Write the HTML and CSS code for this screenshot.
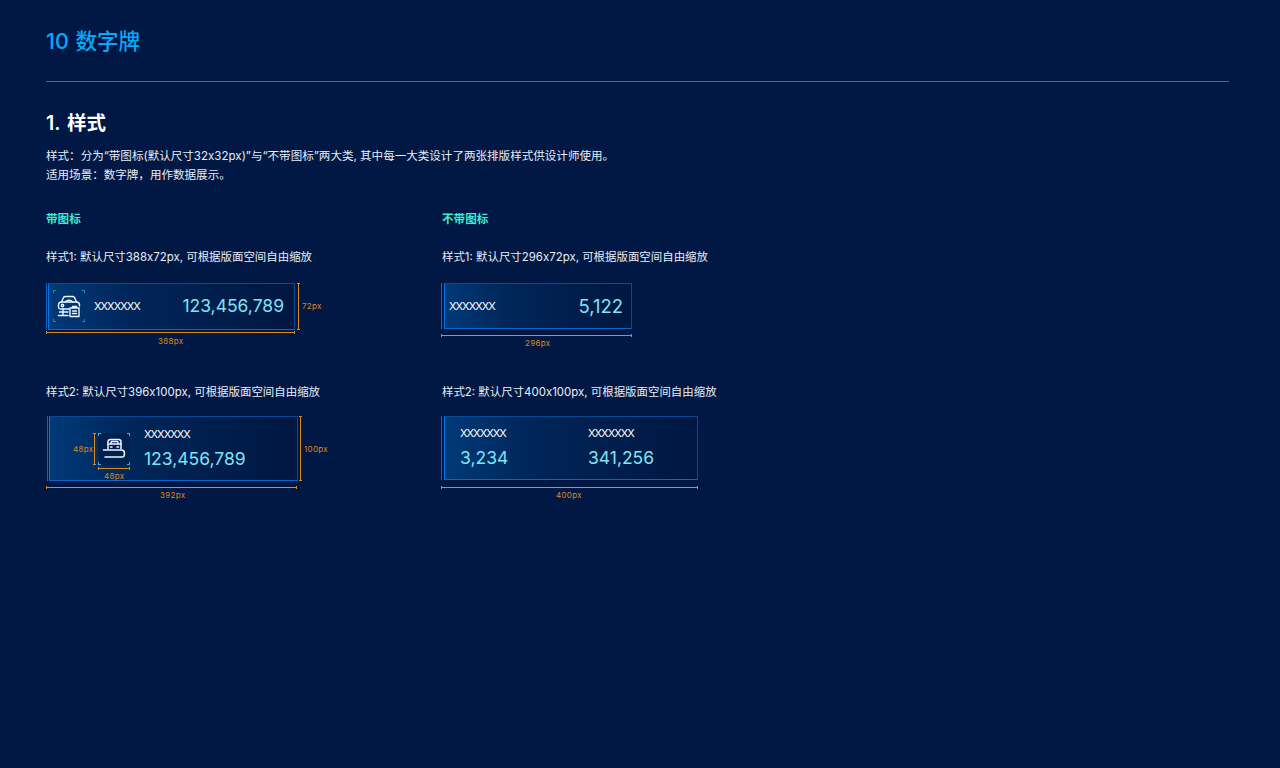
FILE: index.html
```html
<!DOCTYPE html>
<html lang="zh">
<head>
<meta charset="utf-8">
<title>数字牌</title>
<link rel="stylesheet" href="styles.css">
</head>
<body>
<main class="page">
  <h1 class="title">10 数字牌</h1>
  <hr class="rule">
  <h2 class="heading">1. 样式</h2>
  <p class="desc">样式：分为“带图标(默认尺寸32x32px)”与“不带图标”两大类, 其中每一大类设计了两张排版样式供设计师使用。<br>适用场景：数字牌，用作数据展示。</p>
  <div class="columns">
    <section class="col">
      <h3 class="sub">带图标</h3>
      <p class="spec">样式1: 默认尺寸388x72px, 可根据版面空间自由缩放</p>
      <div class="figure fig-a">
        <div class="card card-a">
          <span class="frame frame-a">
            <svg class="icon" viewBox="0 0 24 24" fill="none" stroke="#eaf6ff" stroke-width="1.4" stroke-linejoin="round" stroke-linecap="round">
              <path d="M4.500 8 6.500 3.500Q7 2.500 8.500 2.500H15.500Q17 2.500 17.500 3.500L19.500 8"/>
              <path d="M8 8Q12 4.500 16 8"/>
              <path d="M12 15H4Q1.500 15 1.500 13V11Q1.500 8.500 4 8H20Q22.500 8.500 22.500 11V12"/>
              <circle cx="5.500" cy="11.500" r="1.200"/>
              <path d="M6 15V21.500M1.500 21.500H11M2.500 18H11"/>
              <path d="M13 14H22V22.500H13ZM15.500 14V12.500H19.500V14M15.500 17H19.500M15.500 19.500H19.500"/>
            </svg>
          </span>
          <span class="label">XXXXXXX</span>
          <span class="num num-a">123,456,789</span>
        </div>
        <i class="dim-h dim-a-h"></i><span class="note note-a-h">388px</span>
        <i class="dim-v dim-a-v"></i><span class="note note-a-v">72px</span>
      </div>
      <p class="spec spec-2">样式2: 默认尺寸396x100px, 可根据版面空间自由缩放</p>
      <div class="figure fig-b">
        <div class="card card-b">
          <span class="frame frame-b">
            <svg class="icon" viewBox="0 0 24 24" fill="none" stroke="#eaf6ff" stroke-width="1.5" stroke-linejoin="round" stroke-linecap="round">
              <path d="M6 12V5Q6 2.500 8.500 2.500H16.500Q19 2.500 19 5V12"/>
              <path d="M6 7H19M8.500 7 9.500 4.500H15.500L16.500 7M8.500 10H10M15 10H16.500"/>
              <path d="M1.500 13H20Q22.500 13.500 22.500 16.500Q22.500 20 20 20H3"/>
            </svg>
          </span>
          <div class="stack">
            <span class="label">XXXXXXX</span>
            <span class="num">123,456,789</span>
          </div>
        </div>
        <i class="dim-v dim-b-icon-v"></i><span class="note note-b-icon-v">48px</span>
        <i class="dim-h dim-b-icon-h"></i><span class="note note-b-icon-h">48px</span>
        <i class="dim-h dim-b-h"></i><span class="note note-b-h">392px</span>
        <i class="dim-v dim-b-v"></i><span class="note note-b-v">100px</span>
      </div>
    </section>
    <section class="col">
      <h3 class="sub">不带图标</h3>
      <p class="spec">样式1: 默认尺寸296x72px, 可根据版面空间自由缩放</p>
      <div class="figure fig-a">
        <div class="card card-c">
          <span class="label">XXXXXXX</span>
          <span class="num num-a">5,122</span>
        </div>
        <i class="dim-h dim-c-h"></i><span class="note note-c-h">296px</span>
      </div>
      <p class="spec spec-2">样式2: 默认尺寸400x100px, 可根据版面空间自由缩放</p>
      <div class="figure fig-b">
        <div class="card card-d">
          <div class="stack stack-d">
            <span class="label">XXXXXXX</span>
            <span class="num">3,234</span>
          </div>
          <div class="stack">
            <span class="label">XXXXXXX</span>
            <span class="num">341,256</span>
          </div>
        </div>
        <i class="dim-h dim-d-h"></i><span class="note note-d-h">400px</span>
      </div>
    </section>
  </div>
</main>
</body>
</html>
```
FILE: styles.css
```css
* { box-sizing: border-box; }
html, body { margin: 0; height: 100%; }
body {
  background: #001843;
  color: #e6eef8;
  font-family: Inter, "Noto Sans CJK SC", sans-serif;
  overflow: hidden;
}
.page { padding: 0 51px 0 46px; height: 768px; }
.title {
  margin: 0;
  padding-top: 27px;
  font-size: 21.5px;
  line-height: 28px;
  font-weight: 500;
  word-spacing: 1px;
  color: #05aaff;
}
.rule { margin: 26px 0 0; border: 0; height: 1px; background: #1a74c8; }
.heading {
  margin: 27px 0 0;
  font-size: 19.5px;
  line-height: 28px;
  font-weight: 600;
  word-spacing: 2px;
  color: #fff;
}
.desc {
  margin: 10px 0 0;
  font-size: 11.55px;
  line-height: 18.5px;
}
.columns { display: grid; grid-template-columns: 396px 396px; margin-top: 26px; }
.sub {
  margin: 0;
  font-size: 11.6px;
  line-height: 18px;
  font-weight: 600;
  color: #3fe8d0;
}
.spec {
  margin: 20px 0 0;
  font-size: 11.45px;
  line-height: 18px;
}
.spec-2 { margin-top: 0; }
.figure { position: relative; }
.fig-a { height: 117px; padding-top: 17px; }
.fig-b { height: 100px; padding-top: 15px; }
.card {
  display: flex;
  align-items: center;
  background: linear-gradient(90deg, #003a78 0%, #002558 35%, #001741 100%);
  border: 1px solid #0a4a94;
  border-bottom-color: #0a66cc;
  border-left-color: #0a72e4;
  position: relative;
}
.card::before {
  content: "";
  position: absolute;
  left: -3px;
  top: -1px;
  bottom: -1px;
  width: 1px;
  background: #0a66cc;
}
.card-a { margin-left: 2px; width: 247px; height: 47px; padding: 0 10px 1px 4px; }
.card-b { margin-left: 3px; width: 249px; height: 65px; padding-left: 48px; }
.card-c { margin-left: 2px; width: 188px; height: 46px; padding: 0 8px 0 4px; }
.card-c .num { font-size: 18.5px; }
.card-c::before, .card-d::before { left: -4px; }
.card-d { margin-left: 2px; width: 254px; height: 64px; padding-left: 15px; }
.frame { display: flex; align-items: center; justify-content: center; flex: none; width: 32px; height: 32px; }
.frame-a {
  --c: #2a80bb;
  margin-right: 9px;
}
.frame-b {
  --c: #4aa6e0;
  margin-right: 14px;
}
.frame-a, .frame-b {
  background:
    linear-gradient(var(--c), var(--c)) 0 0 / 3px 1px no-repeat,
    linear-gradient(var(--c), var(--c)) 0 0 / 1px 3px no-repeat,
    linear-gradient(var(--c), var(--c)) 100% 0 / 3px 1px no-repeat,
    linear-gradient(var(--c), var(--c)) 100% 0 / 1px 3px no-repeat,
    linear-gradient(var(--c), var(--c)) 0 100% / 3px 1px no-repeat,
    linear-gradient(var(--c), var(--c)) 0 100% / 1px 3px no-repeat,
    linear-gradient(var(--c), var(--c)) 100% 100% / 3px 1px no-repeat,
    linear-gradient(var(--c), var(--c)) 100% 100% / 1px 3px no-repeat;
}
.frame-b { background-color: #00214f; }
.icon { width: 24px; height: 24px; }
.label { font-size: 11px; line-height: 14px; color: #fff; letter-spacing: -0.95px; }
.num { font-size: 17.5px; line-height: 24px; color: #7fe3f5; font-weight: 400; }
.num-a { margin-left: auto; }
.stack { display: flex; flex-direction: column; gap: 6px; }
.stack-d { width: 128px; }
.dim-h, .dim-v { position: absolute; display: block; background: #d98a1c; }
.dim-h { height: 1px; }
.dim-v { width: 1px; }
.dim-h::before, .dim-h::after { content: ""; position: absolute; top: -1px; width: 1px; height: 3px; background: #d98a1c; }
.dim-h::before { left: 0; }
.dim-h::after { right: 0; }
.dim-v::before, .dim-v::after { content: ""; position: absolute; left: -1px; height: 1px; width: 3px; background: #d98a1c; }
.dim-v::before { top: 0; }
.dim-v::after { bottom: 0; }
.note { position: absolute; font-size: 8px; line-height: 10px; color: #d98a1c; letter-spacing: 0.3px; }
.dim-a-h { left: 0; width: 249px; top: 66px; }
.note-a-h { left: 112px; top: 70px; }
.dim-a-v { left: 252px; top: 17px; height: 47px; }
.note-a-v { left: 256px; top: 35px; }
.dim-c-h { left: -1px; width: 191px; top: 69px; }
.note-c-h { left: 83px; top: 72px; }
.dim-b-icon-v { left: 48px; top: 32px; height: 32px; }
.note-b-icon-v { left: 27px; top: 43px; }
.dim-b-icon-h { left: 52px; width: 32px; top: 67px; }
.note-b-icon-h { left: 58px; top: 70px; }
.dim-b-h { left: 0; width: 251px; top: 86px; }
.note-b-h { left: 114px; top: 89px; }
.dim-b-v { left: 254px; top: 15px; height: 65px; }
.note-b-v { left: 258px; top: 43px; }
.dim-d-h { left: -1px; width: 257px; top: 86px; }
.note-d-h { left: 114px; top: 89px; }
```
